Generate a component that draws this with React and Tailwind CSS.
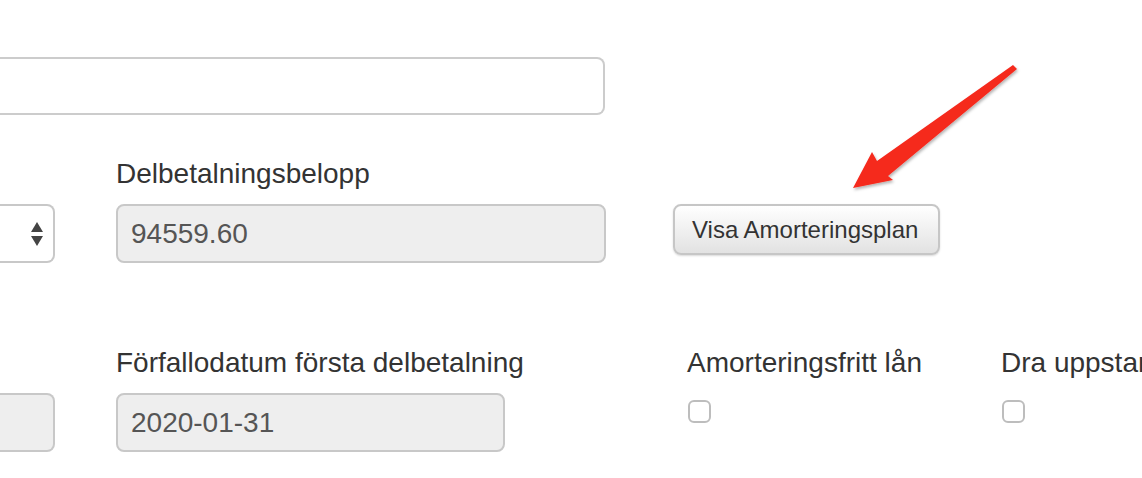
import React from 'react';

function Arrow() {
  return (
    <svg
      className="absolute left-0 top-0 pointer-events-none"
      width="1142"
      height="478"
      viewBox="0 0 1142 478"
    >
      <defs>
        <filter id="arrowShadow" x="-20%" y="-20%" width="140%" height="140%">
          <feDropShadow dx="1" dy="2" stdDeviation="1.5" floodColor="#000" floodOpacity="0.3" />
        </filter>
      </defs>
      <polygon
        points="1013,65 1017,69 888,176 893,180 853,188 872,152 877,161"
        fill="#f5291f"
        filter="url(#arrowShadow)"
      />
    </svg>
  );
}

function Label({ children }) {
  return <div className="text-[28px] leading-[30px] text-[#333] whitespace-nowrap">{children}</div>;
}

function Checkbox() {
  return <div className="mt-[22px] ml-[1px] w-[23px] h-[23px] border-2 border-[#bdbdbd] rounded-[6px] bg-white" />;
}

export default function App() {
  return (
    <div
      className="relative w-[1142px] h-[478px] bg-white overflow-hidden"
      style={{ fontFamily: '"Liberation Sans", Arial, sans-serif' }}
    >
      <div className="pt-[57px]">
        <div className="w-[605px] h-[58px] border-2 border-l-0 border-[#cccccc] rounded-r-lg bg-white" />
      </div>

      {/* row 2 */}
      <div className="flex mt-[44px]">
        <div className="w-[55px] shrink-0 pt-[45px]">
          <div className="h-[59px] border-2 border-l-0 border-[#c8c8c8] rounded-r-lg bg-white flex items-center justify-end pr-[10px]">
            <div className="flex flex-col items-center gap-[4px]">
              <div className="w-0 h-0 border-l-[6px] border-r-[6px] border-b-[10px] border-l-transparent border-r-transparent border-b-[#444]" />
              <div className="w-0 h-0 border-l-[6px] border-r-[6px] border-t-[10px] border-l-transparent border-r-transparent border-t-[#444]" />
            </div>
          </div>
        </div>
        <div className="ml-[61px] w-[490px] shrink-0">
          <Label>Delbetalningsbelopp</Label>
          <div className="mt-[15px] h-[59px] border-2 border-[#c8c8c8] rounded-lg bg-[#eeeeee] flex items-center pl-[13px] text-[28px] text-[#555]">
            94559.60
          </div>
        </div>
        <div className="ml-[67px] shrink-0 pt-[45px]">
          <button className="w-[267px] h-[51px] pl-[17px] text-left border-2 border-[#c6c6c6] rounded-lg bg-gradient-to-b from-white to-[#e2e2e2] shadow-[0_1px_2px_rgba(0,0,0,0.15)] text-[24px] text-[#333] leading-none">
            Visa Amorteringsplan
          </button>
        </div>
      </div>

      {/* row 3 */}
      <div className="flex mt-[85px]">
        <div className="w-[55px] shrink-0 pt-[45px]">
          <div className="h-[59px] border-2 border-l-0 border-[#c8c8c8] rounded-r-lg bg-[#eeeeee]" />
        </div>
        <div className="ml-[61px] w-[389px] shrink-0">
          <Label>Förfallodatum första delbetalning</Label>
          <div className="mt-[15px] h-[59px] border-2 border-[#c8c8c8] rounded-lg bg-[#eeeeee] flex items-center pl-[13px] text-[28px] text-[#555]">
            2020-01-31
          </div>
        </div>
        <div className="ml-[182px] w-[314px] shrink-0">
          <Label>Amorteringsfritt lån</Label>
          <Checkbox />
        </div>
        <div className="shrink-0">
          <Label>Dra uppstartsavgift</Label>
          <Checkbox />
        </div>
      </div>

      <Arrow />
    </div>
  );
}
